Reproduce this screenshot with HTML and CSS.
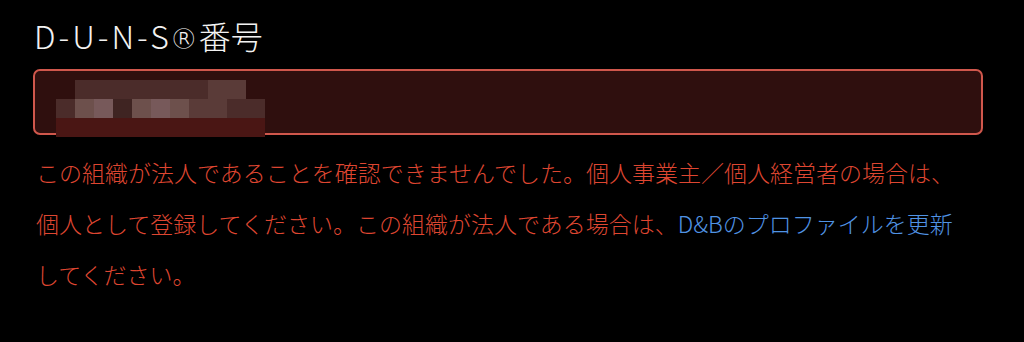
FILE: index.html
```html
<!DOCTYPE html>
<html lang="ja">
<head>
    <meta charset="UTF-8">
    <meta name="viewport" content="width=device-width, initial-scale=1.0">
    <title>D-U-N-S番号</title>
    <link rel="stylesheet" href="styles.css">
</head>
<body>
    <div class="field">
        <label class="field-label" for="duns"><span class="latin">D-U-N-S</span><span class="reg">®</span>番号</label>
        <div class="input-box error-input" id="duns">
            <!-- 入力値はぼかし表示 -->
            <div class="blur">
                <span></span><span class="b1"></span><span class="b1"></span><span class="b1"></span><span class="b1"></span><span class="b1"></span><span class="b1"></span><span class="b1"></span><span class="b2"></span><span class="b2"></span><span></span>
                <span class="b1"></span><span class="b3"></span><span class="b4"></span><span class="b5"></span><span class="b3"></span><span class="b4"></span><span class="b3"></span><span class="b2"></span><span class="b2"></span><span class="b1"></span><span class="b1"></span>
                <span class="r"></span><span class="r"></span><span class="r"></span><span class="r"></span><span class="r"></span><span class="r"></span><span class="r"></span><span class="r"></span><span class="r"></span><span class="r"></span><span class="r"></span>
            </div>
        </div>
        <p class="error">この組織が法人であることを確認できませんでした。個人事業主／個人経営者の場合は、個人として登録してください。この組織が法人である場合は、<a href="#">D&amp;Bのプロファイルを更新</a>してください。</p>
    </div>
</body>
</html>
```

FILE: styles.css
```css
body {
    margin: 0;
    background-color: #000;
    font-family: "Noto Sans CJK JP", "Noto Sans", sans-serif;
    font-weight: 300;
    color: #f2f2f2;
}
.field {
    padding: 12px 41px 0 33px;
}
.field-label {
    display: block;
    height: 46px;
    font-size: 32px;
    line-height: 46px;
    padding-left: 1px;
}
.field-label .latin {
    letter-spacing: 3px;
}
.field-label .reg {
    font-family: "DejaVu Sans", sans-serif;
    font-size: 28px;
    line-height: 0;
    margin-left: -2px;
    margin-right: 1px;
}
.input-box {
    position: relative;
    margin-top: 11px;
    height: 62px;
    border: 2px solid #d0574c;
    border-radius: 7px;
    background-color: #2f0f0e;
}
.blur {
    position: absolute;
    left: 21px;
    top: 9px;
    display: grid;
    grid-template-columns: repeat(11, 19px);
    grid-auto-rows: 19px;
}
.blur span { display: block; }
.blur .b1 { background: #4b2c2a; }
.blur .b2 { background: #5a3b38; }
.blur .b3 { background: #6d504c; }
.blur .b4 { background: #77595a; }
.blur .b5 { background: #3f2422; }
.blur .r { background: #4a1614; }
.error {
    margin: 12px 0 0;
    padding-left: 3px;
    max-width: 930px;
    font-size: 23px;
    line-height: 51px;
    color: #de4631;
}
.error a {
    color: #5093e4;
    text-decoration: none;
}
```
